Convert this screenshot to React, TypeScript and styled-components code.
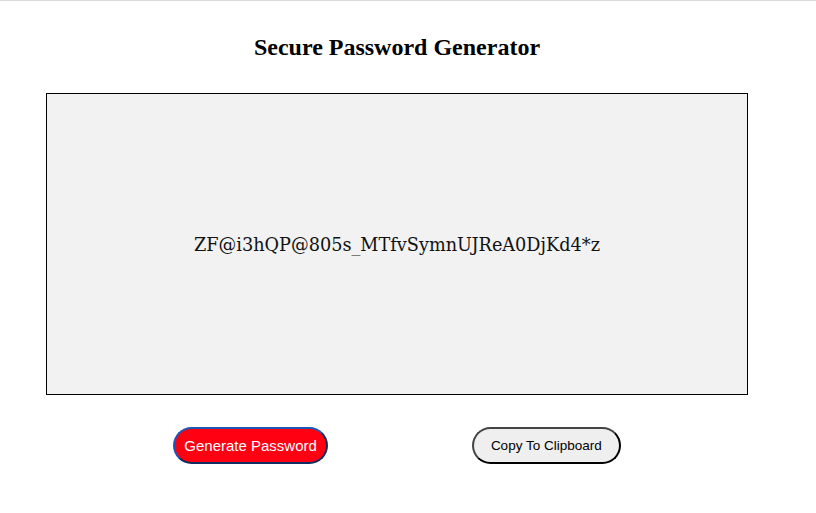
import styled, { createGlobalStyle } from "styled-components";

const GlobalStyle = createGlobalStyle`
  html, body {
    margin: 0;
    padding: 0;
    background: #ffffff;
  }
  body {
    border-top: 1px solid #d9d9d9;
  }
`;

const Page = styled.div`
  width: 794px;
  display: flex;
  flex-direction: column;
  align-items: center;
  font-family: "Liberation Serif", "Times New Roman", serif;
`;

const Title = styled.h2`
  font-size: 24px;
  font-weight: bold;
  margin: 32px 0 0;
  line-height: 28px;
  color: #000;
`;

const PasswordBox = styled.div`
  box-sizing: border-box;
  width: 702px;
  height: 302px;
  margin-top: 32px;
  padding-top: 2px;
  border: 1px solid #000;
  background: #f2f2f2;
  display: flex;
  align-items: center;
  justify-content: center;
  font-family: "DejaVu Serif", Georgia, serif;
  font-size: 17.7px;
  color: #111;
`;

const ButtonRow = styled.div`
  display: flex;
  gap: 144px;
  margin-top: 32px;
`;

const PillButton = styled.button<{ $primary?: boolean }>`
  box-sizing: border-box;
  height: 37px;
  padding: 0 ${(p) => (p.$primary ? "9px" : "17px")};
  border-radius: 19px;
  border: 2px outset ${(p) => (p.$primary ? "#1f56b5" : "#444")};
  background: ${(p) => (p.$primary ? "#ff0012" : "#efefef")};
  color: ${(p) => (p.$primary ? "#fff" : "#000")};
  font-family: "Liberation Sans", Arial, sans-serif;
  font-size: ${(p) => (p.$primary ? "15px" : "13.5px")};
  cursor: pointer;
`;

const App = () => {
  return (
    <Page>
      <GlobalStyle />
      <Title>Secure Password Generator</Title>
      <PasswordBox>ZF@i3hQP@805s_MTfvSymnUJReA0DjKd4*z</PasswordBox>
      <ButtonRow>
        <PillButton $primary>Generate Password</PillButton>
        <PillButton>Copy To Clipboard</PillButton>
      </ButtonRow>
    </Page>
  );
};

export default App;
